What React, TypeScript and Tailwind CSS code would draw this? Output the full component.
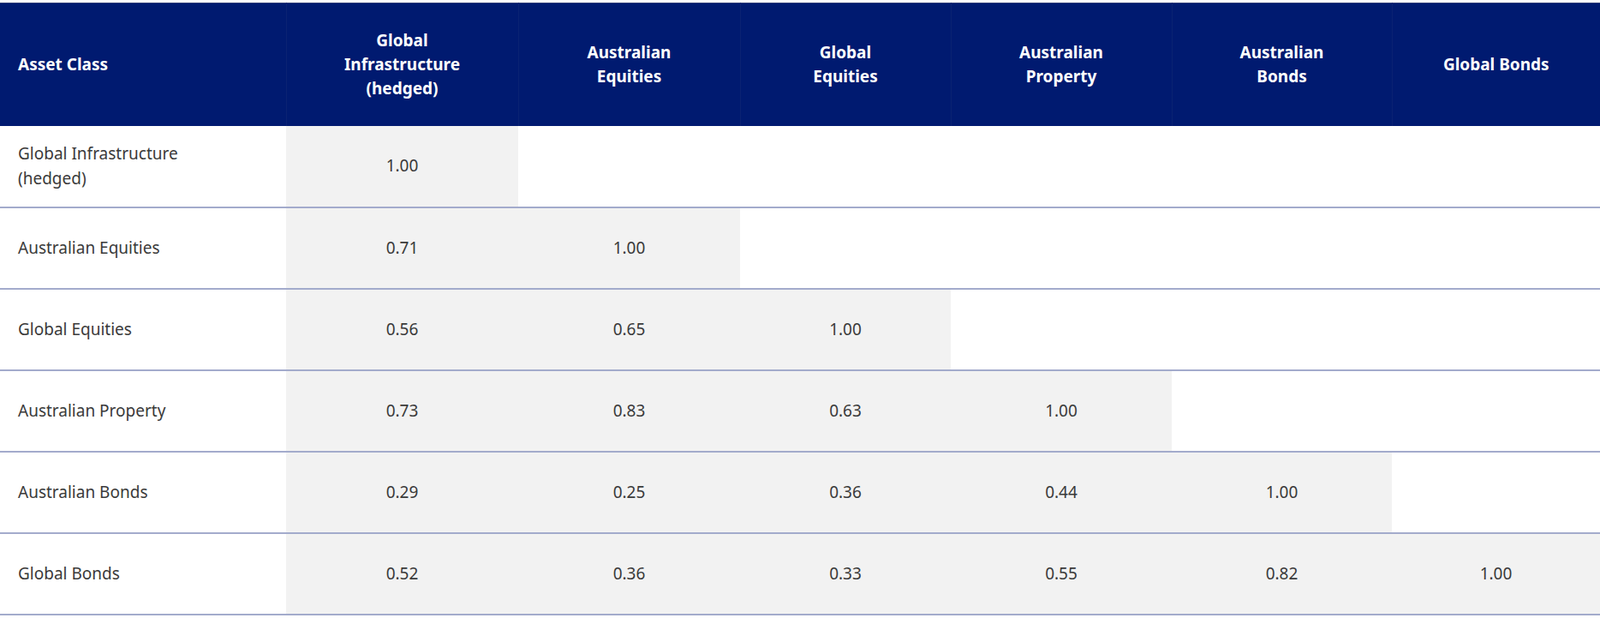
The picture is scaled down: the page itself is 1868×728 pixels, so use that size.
const cols = ['Global Infrastructure (hedged)', 'Australian Equities', 'Global Equities', 'Australian Property', 'Australian Bonds', 'Global Bonds'];
const headers = [['Global', 'Infrastructure', '(hedged)'], ['Australian', 'Equities'], ['Global', 'Equities'], ['Australian', 'Property'], ['Australian', 'Bonds'], ['Global Bonds']];
const widths = ['w-[334px]', 'w-[271px]', 'w-[259px]', 'w-[246px]', 'w-[258px]', 'w-[257px]', 'w-[243px]'];
const rows: { name: string[]; vals: string[] }[] = [
  { name: ['Global Infrastructure', '(hedged)'], vals: ['1.00'] },
  { name: ['Australian Equities'], vals: ['0.71', '1.00'] },
  { name: ['Global Equities'], vals: ['0.56', '0.65', '1.00'] },
  { name: ['Australian Property'], vals: ['0.73', '0.83', '0.63', '1.00'] },
  { name: ['Australian Bonds'], vals: ['0.29', '0.25', '0.36', '0.44', '1.00'] },
  { name: ['Global Bonds'], vals: ['0.52', '0.36', '0.33', '0.55', '0.82', '1.00'] },
];

export default function App() {
  return (
    <div className="w-[1868px] h-[728px] bg-white pt-[3px] font-['Open_Sans',sans-serif]">
      <table className="w-[1868px] table-fixed border-collapse">
        <thead>
          <tr className="bg-[#001a70] text-white h-[143px] border-t border-[#33407a]">
            <th className={`${widths[0]} text-left pl-[21px] text-[19px] font-bold`}>Asset Class</th>
            {headers.map((h, i) => (
              <th key={i} className={`${widths[i + 1]} text-center text-[19px] font-bold leading-[28px] border-l border-[#0a2272]`}>
                {h.map(l => <div key={l}>{l}</div>)}
              </th>
            ))}
          </tr>
        </thead>
        <tbody>
          {rows.map(r => (
            <tr key={r.name[0]} className="h-[95px] border-b-2 border-[#a3abcc] text-[#3a3a3a]">
              <td className="pl-[21px] text-[19px] leading-[29px]">
                {r.name.map(l => <div key={l}>{l}</div>)}
              </td>
              {cols.map((c, i) => (
                <td key={c} className={`text-center text-[19px] ${i < r.vals.length ? 'bg-[#f2f2f2]' : 'bg-white'}`}>
                  {r.vals[i] ?? ''}
                </td>
              ))}
            </tr>
          ))}
        </tbody>
      </table>
    </div>
  );
}
